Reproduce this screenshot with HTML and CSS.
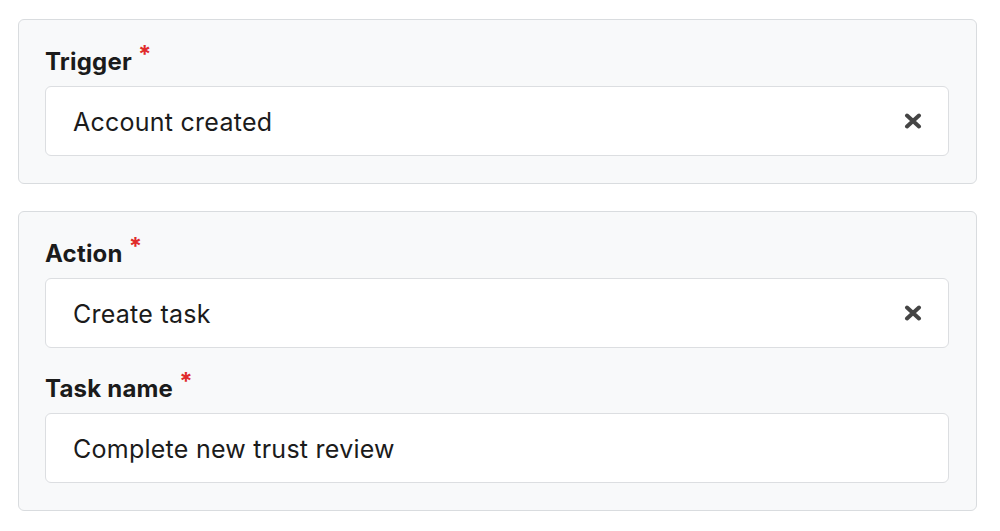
FILE: index.html
```html
<!DOCTYPE html>
<html>
<head>
<meta charset="utf-8">
<link rel="stylesheet" href="styles.css">
</head>
<body>
<div class="card">
  <div class="label">Trigger<span class="req">*</span></div>
  <div class="field">
    <span class="value">Account created</span>
    <svg class="clear" viewBox="0 0 18 16" width="18" height="16"><path d="M3 2.5 L15 13.5 M15 2.5 L3 13.5" stroke="#454545" stroke-width="4" stroke-linecap="round"/></svg>
  </div>
</div>
<div class="card">
  <div class="label">Action<span class="req">*</span></div>
  <div class="field">
    <span class="value">Create task</span>
    <svg class="clear" viewBox="0 0 18 16" width="18" height="16"><path d="M3 2.5 L15 13.5 M15 2.5 L3 13.5" stroke="#454545" stroke-width="4" stroke-linecap="round"/></svg>
  </div>
  <div class="label spaced">Task name<span class="req">*</span></div>
  <div class="field">
    <span class="value">Complete new trust review</span>
  </div>
</div>
</body>
</html>
```
FILE: styles.css
```css
html, body { margin: 0; background: #fff; }
body {
  padding: 19px 23px 0 18px;
  font-family: Inter, "Noto Sans", sans-serif;
  color: #1b1b1b;
}
.card {
  background: #f8f9fa;
  border: 1px solid #d9dcdf;
  border-radius: 6px;
  padding: 27px 27px 27px 26px;
  margin-bottom: 27px;
}
.label {
  font-size: 24px;
  font-weight: 700;
  line-height: 30px;
  height: 30px;
  margin-bottom: 9px;
  letter-spacing: 0.2px;
}
.label.spaced { margin-top: 26px; }
.req {
  color: #e02b2b;
  font-size: 24px;
  line-height: 0;
  position: relative;
  top: -7px;
  margin-left: 6px;
}
.field {
  height: 68px;
  background: #fff;
  border: 1px solid #dcdee1;
  border-radius: 6px;
  display: flex;
  align-items: center;
  padding: 0 26px 0 27px;
}
.value {
  flex: 1;
  font-size: 25px;
  font-weight: 400;
  letter-spacing: 0.25px;
  color: #1b1b1b;
  position: relative;
  top: 1px;
}
.clear { flex: none; }
```
